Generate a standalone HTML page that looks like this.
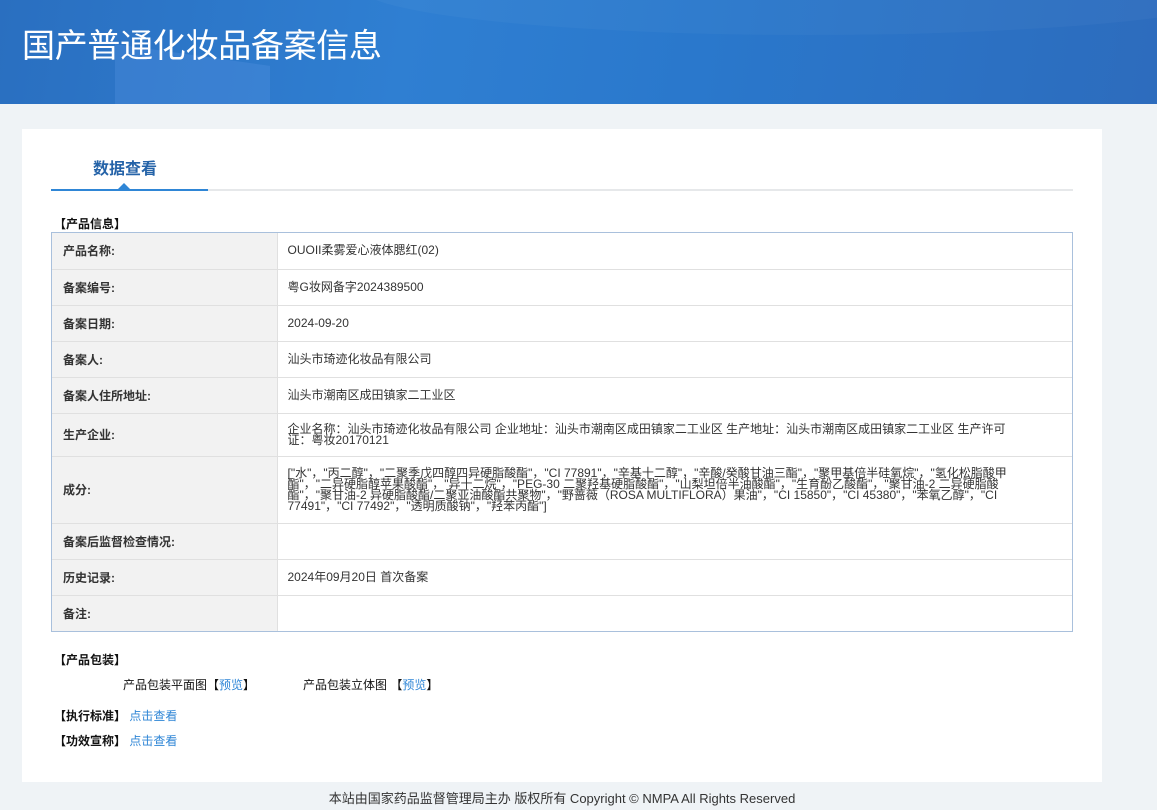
<!DOCTYPE html>
<html><head><meta charset="utf-8"><style>
*{margin:0;padding:0;box-sizing:border-box}
body{width:1157px;height:810px;background:#eff3f6;font-family:"Liberation Sans","Noto Sans CJK SC",sans-serif;position:relative;overflow:hidden;color:#333}
.hdr{position:absolute;left:0;top:0;width:1157px;height:104px;background:linear-gradient(100deg,#2a6fc0 0%,#2f7fd2 35%,#2a78cc 60%,#2d6cbd 100%);overflow:hidden}
.hdr .s1{position:absolute;left:115px;top:55px;width:155px;height:60px;background:rgba(90,150,230,.3);transform:skewY(8deg)}
.hdr .s2{position:absolute;left:360px;top:-60px;width:900px;height:95px;border-radius:50%;background:rgba(255,255,255,.03)}
.hdr h1{position:absolute;left:22px;top:19px;font-size:33px;font-weight:normal;color:#fff;letter-spacing:-0.3px}
.panel{position:absolute;left:22px;top:129px;width:1080px;height:653px;background:#fff}
.tab{position:absolute;left:93px;top:155px;font-size:16px;font-weight:bold;color:#2563a8}
.line{position:absolute;left:51px;top:189px;width:1022px;height:2px;background:#e6e8ea}
.line2{position:absolute;left:51px;top:189px;width:157px;height:2px;background:#2f86d6}
.tri{position:absolute;left:118px;top:183px;width:0;height:0;border-left:6px solid transparent;border-right:6px solid transparent;border-bottom:6px solid #2f86d6}
.sec{position:absolute;font-size:12px;font-weight:bold;color:#111}
.wrap{position:absolute;left:51px;top:232px;width:1022px;height:400px;border:1px solid #a9c0dc}
table{width:1020px;border-collapse:collapse;font-size:12px}
td{border:1px solid #e0e0e0;vertical-align:middle}
tr:first-child td{border-top:none}
tr:last-child td{border-bottom:none}
td:first-child{border-left:none}
td:last-child{border-right:none}
td.l{width:225px;background:#f2f2f2;font-weight:bold;padding-left:11px;color:#333}
td.v{padding:0 10px;color:#333;line-height:11px}
.t{position:absolute;font-size:12px;color:#111}
a{color:#2f86d6;text-decoration:none}
.foot{position:absolute;left:0;width:1124px;top:788px;text-align:center;font-size:13px;color:#333}
</style></head><body>
<div class="hdr"><div class="s1"></div><div class="s2"></div><h1>国产普通化妆品备案信息</h1></div>
<div class="panel"></div>
<div class="tab">数据查看</div>
<div class="line"></div><div class="line2"></div><div class="tri"></div>
<div class="sec" style="left:54px;top:215px">【产品信息】</div>
<div class="wrap"><table>
<tr style="height:36px"><td class="l">产品名称:</td><td class="v">OUOII柔雾爱心液体腮红(02)</td></tr>
<tr style="height:36px"><td class="l">备案编号:</td><td class="v">粤G妆网备字2024389500</td></tr>
<tr style="height:36px"><td class="l">备案日期:</td><td class="v">2024-09-20</td></tr>
<tr style="height:36px"><td class="l">备案人:</td><td class="v">汕头市琦迹化妆品有限公司</td></tr>
<tr style="height:36px"><td class="l">备案人住所地址:</td><td class="v">汕头市潮南区成田镇家二工业区</td></tr>
<tr style="height:43px"><td class="l">生产企业:</td><td class="v" style="padding-right:60px">企业名称：汕头市琦迹化妆品有限公司 企业地址：汕头市潮南区成田镇家二工业区 生产地址：汕头市潮南区成田镇家二工业区 生产许可证：粤妆20170121</td></tr>
<tr style="height:67px"><td class="l">成分:</td><td class="v" style="padding-right:64px">["水"，"丙二醇"，"二聚季戊四醇四异硬脂酸酯"，"CI 77891"，"辛基十二醇"，"辛酸/癸酸甘油三酯"，"聚甲基倍半硅氧烷"，"氢化松脂酸甲酯"，"二异硬脂醇苹果酸酯"，"异十二烷"，"PEG-30 二聚羟基硬脂酸酯"，"山梨坦倍半油酸酯"，"生育酚乙酸酯"，"聚甘油-2 二异硬脂酸酯"，"聚甘油-2 异硬脂酸酯/二聚亚油酸酯共聚物"，"野蔷薇（ROSA MULTIFLORA）果油"，"CI 15850"，"CI 45380"，"苯氧乙醇"，"CI 77491"，"CI 77492"，"透明质酸钠"，"羟苯丙酯"]</td></tr>
<tr style="height:36px"><td class="l">备案后监督检查情况:</td><td class="v"></td></tr>
<tr style="height:36px"><td class="l">历史记录:</td><td class="v">2024年09月20日 首次备案</td></tr>
<tr style="height:36px"><td class="l">备注:</td><td class="v"></td></tr>
</table></div>
<div class="sec" style="left:54px;top:651px">【产品包装】</div>
<div class="t" style="left:123px;top:676px">产品包装平面图【<a>预览</a>】</div>
<div class="t" style="left:303px;top:676px">产品包装立体图 【<a>预览</a>】</div>
<div class="sec" style="left:54px;top:707px">【执行标准】 <a style="font-weight:normal">点击查看</a></div>
<div class="sec" style="left:54px;top:732px">【功效宣称】 <a style="font-weight:normal">点击查看</a></div>
<div class="foot">本站由国家药品监督管理局主办 版权所有 Copyright © NMPA All Rights Reserved</div>
</body></html>
